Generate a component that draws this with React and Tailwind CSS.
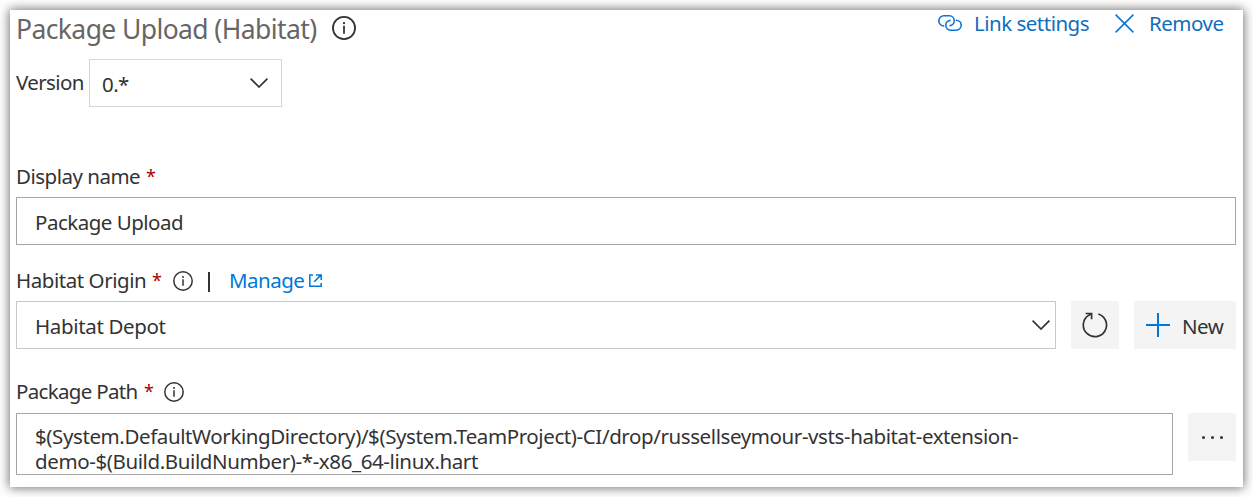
const INK = "text-[#333333]";

function InfoIcon({ className }) {
  return (
    <svg viewBox="0 0 20 20" className={`shrink-0 ${className}`} fill="none" stroke="#333333">
      <circle cx="10" cy="10" r="9.2" strokeWidth="1.5" />
      <path d="M10 8.2V14.8" strokeWidth="1.5" />
      <circle cx="10" cy="5.9" r="1" fill="#333333" stroke="none" />
    </svg>
  );
}

function Chevron() {
  return (
    <svg viewBox="0 0 18 10" className="h-[10px] w-[18px] shrink-0" fill="none" stroke="#333333" strokeWidth="1.7">
      <path d="M0.6 0.7L9 9L17.4 0.7" />
    </svg>
  );
}

function LinkIcon() {
  return (
    <svg viewBox="0 0 24 16" className="h-[16px] w-[24px] shrink-0" fill="none" stroke="#0e73d0" strokeWidth="1.6">
      <path d="M6.2 10.9C3.2 10.9 0.8 8.9 0.8 5.9C0.8 3 3 0.8 6 0.8H11.4C14.2 0.8 16.2 3 16.2 5.8C16.2 8.6 14.3 10.7 11.4 10.7" />
      <path d="M17.8 5.3C20.8 5.3 23.2 7.2 23.2 10.1C23.2 13 21 15.2 18 15.2H12.6C9.8 15.2 7.8 13 7.8 10.3C7.8 7.5 9.7 5.4 12.6 5.4" />
    </svg>
  );
}

function CrossIcon() {
  return (
    <svg viewBox="0 0 19 19" className="h-[19px] w-[19px] shrink-0" stroke="#0e73d0" strokeWidth="1.5">
      <path d="M0.6 0.6L18.4 18.4M18.4 0.6L0.6 18.4" />
    </svg>
  );
}

function ExternalIcon() {
  return (
    <svg viewBox="0 0 13 13" className="h-[13px] w-[13px] shrink-0" fill="none" stroke="#0078d7" strokeWidth="1.5">
      <path d="M4 0.9H0.8V12.2H12.2V9M5.2 7.8L11.6 1.4M7 0.9H12.2V6" />
    </svg>
  );
}

function RefreshIcon() {
  return (
    <svg viewBox="0 0 26 26" className="h-[26px] w-[26px] shrink-0" fill="none" stroke="#333333" strokeWidth="1.7">
      <path d="M16.4 2A11.6 11.6 0 1 1 6.5 3.4L9 1.9" />
      <path d="M3.6 1.5H9.6V7.2" />
    </svg>
  );
}

function Star() {
  return <span className="w-[19px] text-[18px] text-[#a80000]">*</span>;
}

export default function App() {
  return (
    <div className={`h-[497px] w-[1253px] bg-white p-[10px] font-['Noto_Sans',sans-serif] text-[20.5px] ${INK}`}>
      <main className="flex h-[477px] w-[1233px] flex-col overflow-visible bg-white pl-[6px] pr-[7px] shadow-[0_0_10px_1px_rgba(0,0,0,0.55)]">
        <header className="flex h-[49px] shrink-0 items-start whitespace-nowrap text-[#106ebe]">
          <h1 className="w-[316px] text-[26.5px] leading-[38px] tracking-[-0.6px] text-[#666666]">Package Upload (Habitat)</h1>
          <InfoIcon className="mt-[6px] h-[24px] w-[24px]" />
          <div className="ml-auto flex h-[26px] items-center">
            <LinkIcon />
            <a className="ml-[12px] w-[116px] tracking-[-0.5px]">Link settings</a>
            <span className="ml-[25px] flex"><CrossIcon /></span>
            <a className="ml-[15px] w-[87px] tracking-[-0.5px]">Remove</a>
          </div>
        </header>

        <div className="flex h-[48px] shrink-0 items-center">
          <span className="w-[73px] whitespace-nowrap pb-px tracking-[-0.6px]">Version</span>
          <div className="flex h-[48px] w-[193px] items-center justify-between border border-[#d6d6d6] pl-[12px] pr-[13px]">
            <span className="pt-[3px] tracking-[-0.6px]">0.*</span>
            <Chevron />
          </div>
        </div>

        <label className="mt-[54px] flex h-[30px] shrink-0 items-center whitespace-nowrap">
          <span className="w-[130px] tracking-[-0.5px]">Display name</span>
          <Star />
        </label>
        <div className="mt-[6px] flex h-[48px] shrink-0 items-center border border-[#a6a6a6] pl-[18px] pt-[3px] tracking-[-0.5px]">
          Package Upload
        </div>

        <div className="mt-[20px] flex h-[30px] shrink-0 items-center whitespace-nowrap">
          <span className="w-[136px] tracking-[-0.45px]">Habitat Origin</span>
          <Star />
          <InfoIcon className="ml-[2px] mt-[2px] h-[20px] w-[20px]" />
          <span className="ml-[15px] mt-[4px] h-[20px] w-[2px] bg-[#333333]" />
          <a className="ml-[19px] w-[80px] tracking-[-0.5px] text-[#0078d7]">Manage</a>
          <ExternalIcon />
        </div>
        <div className="mt-[6px] flex h-[48px] shrink-0">
          <div className="flex w-[1040px] items-center justify-between border border-[#c8c8c8] pl-[18px] pr-[5px]">
            <span className="pt-[3px] tracking-[-0.35px]">Habitat Depot</span>
            <Chevron />
          </div>
          <button className="ml-[15px] flex w-[48px] items-center justify-center bg-[#f4f4f4]">
            <RefreshIcon />
          </button>
          <button className="ml-[15px] flex w-[102px] items-center bg-[#f4f4f4] pl-[12px]">
            <svg viewBox="0 0 24 24" className="h-[24px] w-[24px]" stroke="#0078d7" strokeWidth="2">
              <path d="M12 0V24M0 12H24" />
            </svg>
            <span className="ml-[12px] pt-[3px] tracking-[-0.5px]">New</span>
          </button>
        </div>

        <div className="mt-[27px] flex h-[30px] shrink-0 items-center whitespace-nowrap">
          <span className="w-[128px] tracking-[-0.68px]">Package Path</span>
          <Star />
          <InfoIcon className="ml-px mt-[2px] h-[20px] w-[20px]" />
        </div>
        <div className="mt-[7px] flex shrink-0 items-start">
          <div className="h-[62px] w-[1157px] overflow-hidden whitespace-nowrap border border-[#a6a6a6] pl-[18px] pt-[10px] leading-[25px]">
            <div className="tracking-[-0.4px]">$(System.DefaultWorkingDirectory)/$(System.TeamProject)-CI/drop/russellseymour-vsts-habitat-extension-</div>
            <div className="tracking-[-0.39px]">demo-$(Build.BuildNumber)-*-x86_64-linux.hart</div>
          </div>
          <button className="ml-[15px] flex h-[48px] w-[48px] items-center justify-center gap-[6px] bg-[#f4f4f4]">
            <span className="size-[3px] rounded-full bg-[#333333]" />
            <span className="size-[3px] rounded-full bg-[#333333]" />
            <span className="size-[3px] rounded-full bg-[#333333]" />
          </button>
        </div>
      </main>
    </div>
  );
}
